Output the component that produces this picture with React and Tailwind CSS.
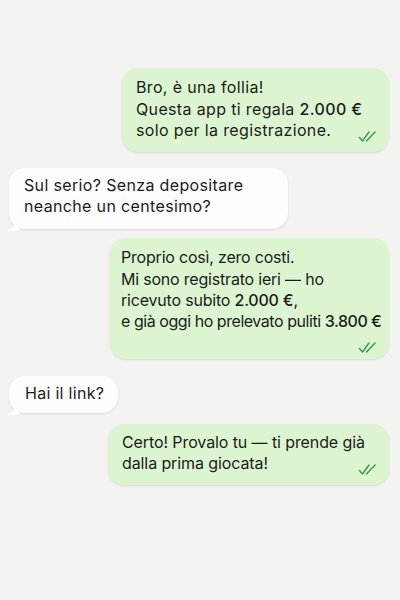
import React from "react";

function Out({ children, className = "", tick = "bottom-[10px]" }) {
  return (
    <div className={`relative self-end mr-[11px] bg-[#dcf5d0] rounded-[16px] shadow-[0_1px_2px_rgba(0,0,0,0.10)] text-[#1b1b1b] ${className}`}>
      {children}
      <svg width="20" height="11" viewBox="0 0 20 11" className={`absolute right-[11px] ${tick}`}>
        <path d="M1.5 6.5 L4.5 10 L11 1" fill="none" stroke="#3f9a57" strokeWidth="1.5" strokeLinecap="round" strokeLinejoin="round" />
        <path d="M8.5 10 L17 1" fill="none" stroke="#3f9a57" strokeWidth="1.5" strokeLinecap="round" />
      </svg>
    </div>
  );
}

function In({ children, className = "" }) {
  return (
    <div className={`relative self-start ml-[9px] bg-[#fdfdfd] rounded-[16px] shadow-[0_1px_2px_rgba(0,0,0,0.10)] text-[#1b1b1b] ${className}`}>
      {children}
      <svg width="14" height="10" viewBox="0 0 14 10" className="absolute -left-[3px] -bottom-[3px]">
        <path d="M0 9 C5 8 8 5 9 0 L14 0 L14 8 C10 9 4 10 0 9 Z" fill="#fdfdfd" />
      </svg>
    </div>
  );
}

export default function App() {
  return (
    <div
      className="w-[400px] h-[600px] bg-[#f2f2f0] flex flex-col text-[16px] leading-[21px] whitespace-nowrap"
      style={{ fontFamily: "Inter, 'Noto Sans', sans-serif" }}
    >
      <Out className="mt-[68px] w-[267px] pl-[14px] pt-[9px] pb-[11px] tracking-[0.35px]">
        <p className="mb-[1px]">Bro, è una follia!</p>
        <p>Questa app ti regala <span className="font-medium">2.000 €</span></p>
        <p>solo per la registrazione.</p>
      </Out>

      <In className="mt-[16px] w-[279px] pl-[15px] pt-[7px] pb-[12px] tracking-[0.35px]">
        <p>Sul serio? Senza depositare</p>
        <p>neanche un centesimo?</p>
      </In>

      <Out className="mt-[9px] w-[279px] pl-[11px] pt-[9px] pb-[27px] tracking-[-0.2px]" tick="bottom-[6px]">
        <p className="mb-[1px]">Proprio così, zero costi.</p>
        <p>Mi sono registrato ieri — ho</p>
        <p>ricevuto subito <span className="font-medium">2.000 €</span>,</p>
        <p className="tracking-[-0.45px]">e già oggi ho prelevato puliti <span className="font-medium">3.800 €</span></p>
      </Out>

      <In className="mt-[17px] w-[109px] pl-[16px] pt-[7px] pb-[9px] tracking-[0.3px]">
        <p>Hai il link?</p>
      </In>

      <Out className="mt-[11px] w-[281px] pl-[14px] pt-[8px] pb-[11px] tracking-[-0.1px]">
        <p>Certo! Provalo tu — ti prende già</p>
        <p>dalla prima giocata!</p>
      </Out>
    </div>
  );
}
